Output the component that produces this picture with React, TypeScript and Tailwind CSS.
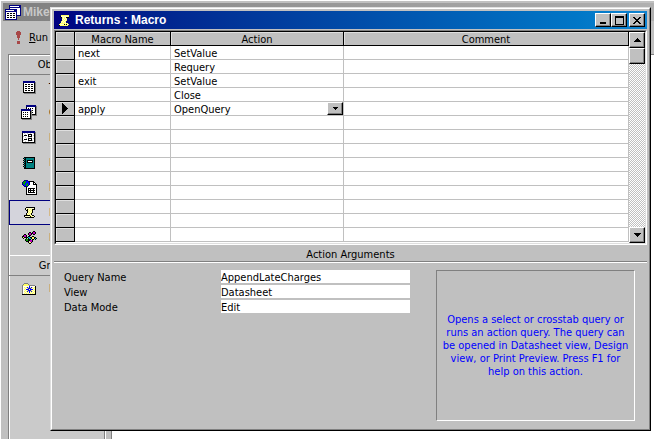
import React from "react";

const palette: Record<string, string> = {
  K: "#000000",
  W: "#ffffff",
  N: "#000080",
  G: "#808080",
  Y: "#ffff66",
  C: "#ffffcc",
  T: "#008080",
  B: "#0000ff",
  E: "#00a000",
  M: "#c000c0",
  A: "#00c0c0",
  R: "#a84848",
  L: "#c0c0c0",
};

function Pixels({ rows }: { rows: string[] }) {
  const width = Math.max(...rows.map((r) => r.length));
  return (
    <svg
      width={width}
      height={rows.length}
      viewBox={`0 0 ${width} ${rows.length}`}
      shapeRendering="crispEdges"
      className="block shrink-0"
      aria-hidden="true"
    >
      {rows.flatMap((row, y) =>
        [...row].map((c, x) =>
          palette[c] ? <rect key={`${x}-${y}`} x={x} y={y} width={1} height={1} fill={palette[c]} /> : null,
        ),
      )}
    </svg>
  );
}

const tableIcon = [
  "NNNNNNNNNNNN.",
  "NNNNNNNNNNNNG",
  "KWWWWWWWWWWKG",
  "KWKKWKKWKKWKG",
  "KWWWWWWWWWWKG",
  "KWKKWKKWKKWKG",
  "KWWWWWWWWWWKG",
  "KWKKWKKWKKWKG",
  "KWWWWWWWWWWKG",
  "KWKKWKKWKKWKG",
  "KWWWWWWWWWWKG",
  "KKKKKKKKKKKKG",
  ".GGGGGGGGGGGG",
];

const queryIcon = [
  ".....NNNNNNNNNN.",
  ".....NNNNNNNNNNG",
  ".....KWWWWWWWWKG",
  ".....KWKWKWKWWKG",
  "NNNNNNNNNNWWWWKG",
  "NNNNNNNNNNGKWWKG",
  "KWWWWWWWWKGWWWKG",
  "KWKWKWKWWKGKWWKG",
  "KWWWWWWWWKGWWWKG",
  "KWKWKWKWWKGKKKKG",
  "KWWWWWWWWKGGGGGG",
  "KWKWKWKWWKG.....",
  "KWWWWWWWWKG.....",
  "KKKKKKKKKKG.....",
  ".GGGGGGGGGG.....",
];

const formIcon = [
  "NNNNNNNNNNNNN.",
  "NNNNNNNNNNNNNG",
  "KWLWWLWWLWWLKG",
  "KWWLWWKKKKWWKG",
  "KWKKKWKWWKWLKG",
  "KLWWWWKKKKWWKG",
  "KWWLWWLWWLWWKG",
  "KWWWLWKKKKWLKG",
  "KWKKKWKWWKWWKG",
  "KLWWWWKKKKLWKG",
  "KWWLWWLWWWWWKG",
  "KKKKKKKKKKKKKG",
  ".GGGGGGGGGGGGG",
];

const reportIcon = [
  ".KKKKKKKKKKK",
  "KTKTTTTTTTTK",
  ".KKTTTTTTTTK",
  "KTKTKKKKKKTK",
  ".KKTKWWWWKTK",
  "KTKTKKKKKKTK",
  ".KKTTTTTTTTK",
  "KTKTTTTTTTTK",
  ".KKTTTTTTTTK",
  "KTKTTTTTTTTK",
  ".KKTTTTTTTTK",
  ".KKKKKKKKKKK",
];

const pageIcon = [
  "..NNNN.........",
  ".NEEBBNKKKKK...",
  "NEEEBBBNWWWKK..",
  "NEEBBEBNWWWKWK.",
  "NBEBEEBNWWWKKKK",
  ".NBBEENWWWWWWWK",
  "..NNNNWWWWWWWWK",
  "....KWWWWWWWWWK",
  "....KWKKKKKKKWK",
  "....KWKWKWWKWWK",
  "....KWKKKKKKKWK",
  "....KWKWKWWKWWK",
  "....KWKKKKKKKWK",
  "....KWWWWWWWWWK",
  "....KKKKKKKKKKK",
];

const macroIcon = [
  "..KKKKKKKKK",
  ".KCCCCCCCCK",
  ".KCKYCYCKKK",
  "..KKCYCYK..",
  "...KYCYCK..",
  "...KCYCYK..",
  "..KCYCYK...",
  "..KYCYCK...",
  "KKKKKKYCKK.",
  "KCCCCCKYCCK",
  ".KKKKKKKKK.",
];

const moduleIcon = [
  "...........KK..",
  ".......KK.KMMK.",
  "......KMMKKMMK.",
  "..KK..KMMK.KK..",
  ".KMMK..KK......",
  "KKMMK.KK..KK...",
  "KYKKKKAAKKYYKK.",
  ".K..K.KAAKYYKAK",
  "...KEEKKK.KK.K.",
  "...KEEKKMMK....",
  "....KKK.MMK....",
  "......KYYK.....",
  ".......KK......",
];

const favoriteIcon = [
  "..GGGG........",
  ".GYYYYG.......",
  "GYYYYYYGGGGGG.",
  "GWWWWWWBWWWWWK",
  "GWYCYBYBYBYCYK",
  "GWCYCYBBBYCYCK",
  "GWYCBBBYBBBCYK",
  "GWCYCYBBBYCYCK",
  "GWYCYBYBYBYCYK",
  "GWCYCYCBCYCYCK",
  "GWYCYCYCYCYCYK",
  "KKKKKKKKKKKKKK",
];

const databaseIcon = [
  "....NNNNNNNNNNNN",
  "....NWWWWWWWWWNN",
  "....NNNNNNNNNNNN",
  "....NWWWWWWWWWWN",
  "NNNNNNNNNNNNWWWN",
  "NWWWWWWWWNNNWWWN",
  "NNNNNNNNNNNNWWWN",
  "NWWWWWWWWWWNWWWN",
  "NWKKWKKWKKWNWWWN",
  "NWWWWWWWWWWNWWWN",
  "NWKKWKKWKKWNNNNN",
  "NWWWWWWWWWWN....",
  "NWKKWKKWKKWN....",
  "NWWWWWWWWWWN....",
  "NNNNNNNNNNNN....",
];

const runIcon = [
  ".RRR.",
  "RRRRR",
  "RRRRR",
  "RRRRR",
  ".RRR.",
  ".RRR.",
  ".RRR.",
  "..R..",
  "..R..",
  ".....",
  ".RRR.",
  ".RRR.",
  ".RRR.",
];

const titleIcon = [
  "..YYYYYYYY",
  ".KCCCCCCCY",
  "..KYCYCKKK",
  "...YCYCY..",
  "...CYCYC..",
  "...YCYCY..",
  "..YCYCY...",
  "..CYCYC...",
  ".YYYYYCYY.",
  "YCCCCKYKCY",
  "KYYYYYYYY.",
];

const upArrow = ["...K...", "..KKK..", ".KKKKK.", "KKKKKKK"];
const downArrow = ["KKKKKKK", ".KKKKK.", "..KKK..", "...K..."];
const smallDown = ["KKKKK", ".KKK.", "..K.."];
const rowPointer = [
  "K.....", "KK....", "KKK...", "KKKK..", "KKKKK.", "KKKKKK", "KKKKK.", "KKKK..", "KKK...", "KK....", "K.....",
];
const minimizeGlyph = [".......", ".......", ".......", ".......", ".......", ".......", "KKKKKK.", "KKKKKK."];
const maximizeGlyph = [
  "KKKKKKKKK", "KKKKKKKKK", "K.......K", "K.......K", "K.......K", "K.......K", "K.......K", "K.......K", "KKKKKKKKK",
];
const closeGlyph = ["KK....KK", ".KK..KK.", "..KKKK..", "...KK...", "..KKKK..", ".KK..KK.", "KK....KK"];

const raised =
  "flex items-center justify-center bg-[#c0c0c0] border border-t-white border-l-white border-r-black border-b-black shadow-[inset_-1px_-1px_0_#808080]";

function CaptionButton({ label, glyph }: { label: string; glyph: string[] }) {
  return (
    <button type="button" aria-label={label} className={`${raised} h-3.5 w-4`}>
      <Pixels rows={glyph} />
    </button>
  );
}

const objects = [
  { name: "Tables", icon: tableIcon },
  { name: "Queries", icon: queryIcon },
  { name: "Forms", icon: formIcon },
  { name: "Reports", icon: reportIcon },
  { name: "Pages", icon: pageIcon },
  { name: "Macros", icon: macroIcon, selected: true },
  { name: "Modules", icon: moduleIcon },
];

function SidebarItem({ name, icon, selected }: { name: string; icon: string[]; selected?: boolean }) {
  return (
    <button
      type="button"
      className={`flex h-[25px] w-full items-center border text-left ${
        selected ? "border-[#000080] bg-[#d4d4dc]" : "border-transparent"
      }`}
    >
      <span className="mr-px flex w-[38px] shrink-0 justify-center">
        <Pixels rows={icon} />
      </span>
      {name}
    </button>
  );
}

function DatabaseWindow() {
  return (
    <div className="flex min-h-screen flex-col bg-[#c0c0c0] pt-0.5">
      <div className="ml-0.5 flex h-[18px] items-center gap-0.5 bg-linear-to-r from-[#808080] to-[#b0b0b0] pl-0.5 font-[Liberation_Sans,sans-serif] text-[12px] font-bold text-[#c8c8c8]">
        <Pixels rows={databaseIcon} />
        Mike
      </div>
      <div className="flex h-[33px] items-center pl-[15px]">
        <button type="button" className="flex items-center gap-2">
          <Pixels rows={runIcon} />
          <span>
            <span className="underline">R</span>un
          </span>
        </button>
      </div>
      <div className="flex grow pl-[7px]">
        <nav className="w-[97px] border-t border-r border-l border-[#808080] bg-[#cacaca] shadow-[inset_1px_1px_0_#fff]">
          <div className="flex h-[19px] items-center justify-center">Objects</div>
          <div className="border-t border-[#808080]">
            {objects.map((o) => (
              <SidebarItem key={o.name} {...o} />
            ))}
          </div>
          <div className="mt-[5px] flex h-5 items-center justify-center border-t border-white">Groups</div>
          <div className="border-t border-[#808080]">
            <SidebarItem name="Favorites" icon={favoriteIcon} />
          </div>
        </nav>
        <div className="w-1.5 border-l border-white" />
        <div className="grow border-t border-l border-[#808080] bg-white" />
      </div>
    </div>
  );
}

const macroRows = [
  { name: "next", action: "SetValue" },
  { name: "", action: "Requery" },
  { name: "exit", action: "SetValue" },
  { name: "", action: "Close" },
  { name: "apply", action: "OpenQuery", current: true },
  ...Array.from({ length: 9 }, () => ({ name: "", action: "" })),
] as { name: string; action: string; current?: boolean }[];

function ActionSelect() {
  return (
    <div className="relative flex h-[13px]">
      <select
        aria-label="Action"
        defaultValue="OpenQuery"
        className="h-[13px] w-full appearance-none bg-transparent pt-0.5 pl-[3px] leading-[11px] outline-none"
      >
        <option>OpenQuery</option>
        <option>SetValue</option>
        <option>Requery</option>
        <option>Close</option>
      </select>
      <span className={`${raised} pointer-events-none absolute top-0 right-0 h-[13px] w-4`}>
        <Pixels rows={smallDown} />
      </span>
    </div>
  );
}

function MacroGrid() {
  const head =
    "h-3.5 border-r border-b border-black bg-[#c0c0c0] px-0 pt-0.5 pb-0 text-center font-normal leading-[11px] shadow-[inset_1px_1px_0_#dfdfdf]";
  const cell = "h-3.5 border-r border-b border-[#c0c0c0] p-0 leading-[11px]";
  return (
    <div className="flex border border-t-[#808080] border-r-white border-b-white border-l-[#808080]">
      <div className="flex min-w-0 grow border border-t-black border-r-[#dfdfdf] border-b-[#dfdfdf] border-l-black bg-white pb-px">
        <table className="w-full table-fixed border-separate border-spacing-0">
          <colgroup>
            <col className="w-[19px]" />
            <col className="w-24" />
            <col className="w-[173px]" />
            <col />
          </colgroup>
          <thead>
            <tr>
              <th className={head} aria-label="Row selector" />
              <th className={head}>Macro Name</th>
              <th className={head}>Action</th>
              <th className={head}>Comment</th>
            </tr>
          </thead>
          <tbody>
            {macroRows.map((r, i) => (
              <tr key={i}>
                <td className="h-3.5 border-r border-b border-black bg-[#c0c0c0] p-0 shadow-[inset_1px_1px_0_#dfdfdf]">
                  {r.current && (
                    <span className="flex justify-center">
                      <Pixels rows={rowPointer} />
                    </span>
                  )}
                </td>
                <td className={cell}>
                  <div className="pt-0.5 pl-[3px]">{r.name}</div>
                </td>
                <td className={cell}>
                  {r.current ? <ActionSelect /> : <div className="pt-0.5 pl-[3px]">{r.action}</div>}
                </td>
                <td className={cell} />
              </tr>
            ))}
          </tbody>
        </table>
        <div className="-mb-px flex w-4 shrink-0 flex-col bg-[repeating-conic-gradient(#fff_0_25%,#c0c0c0_0_50%)] bg-[length:2px_2px]">
          <button type="button" aria-label="Scroll up" className={`${raised} h-4 w-4`}>
            <Pixels rows={upArrow} />
          </button>
          <div className={`${raised} h-4 w-4`} />
          <div className="grow" />
          <button type="button" aria-label="Scroll down" className={`${raised} h-4 w-4`}>
            <Pixels rows={downArrow} />
          </button>
        </div>
      </div>
    </div>
  );
}

const macroArguments = [
  { id: "query-name", label: "Query Name", value: "AppendLateCharges" },
  { id: "view", label: "View", value: "Datasheet" },
  { id: "data-mode", label: "Data Mode", value: "Edit" },
];

function MacroWindow() {
  return (
    <section className="absolute top-[7px] right-[3px] left-[50px] border border-t-[#dfdfdf] border-r-black border-b-black border-l-[#dfdfdf] bg-[#c0c0c0]">
      <div className="border border-t-white border-r-[#808080] border-b-[#808080] border-l-white p-0.5">
        <header className="flex h-[18px] items-center bg-linear-to-r from-[#000080] to-[#1084d0] pr-0.5 pl-[5px]">
          <Pixels rows={titleIcon} />
          <h1 className="grow pl-1.5 font-[Liberation_Sans,sans-serif] text-[12px] font-bold text-white">
            Returns : Macro
          </h1>
          <CaptionButton label="Minimize" glyph={minimizeGlyph} />
          <CaptionButton label="Maximize" glyph={maximizeGlyph} />
          <span className="w-0.5" />
          <CaptionButton label="Close" glyph={closeGlyph} />
        </header>
        <div className="h-px" />
        <MacroGrid />
        <h2 className="flex h-[17px] items-center justify-center border-b border-[#808080] pt-0.5">
          Action Arguments
        </h2>
        <div className="flex items-start border-t border-white pt-[7px] pr-3 pb-1.5 pl-2.5">
          <div className="flex flex-col gap-0.5 leading-[11px]">
            {macroArguments.map((a) => (
              <div key={a.id} className="flex h-[13px] items-center">
                <label htmlFor={a.id} className="w-[157px] pt-0.5">
                  {a.label}
                </label>
                <input
                  id={a.id}
                  defaultValue={a.value}
                  className="h-[13px] w-[189px] bg-white pt-0.5 leading-[11px] outline-none"
                />
              </div>
            ))}
          </div>
          <p className="ml-[26px] flex h-[151px] grow items-center justify-center border border-t-[#808080] border-r-white border-b-white border-l-[#808080] px-1 text-center text-[#0000ff]">
            Opens a select or crosstab query or runs an action query. The query can be opened in Datasheet view, Design
            view, or Print Preview. Press F1 for help on this action.
          </p>
        </div>
      </div>
    </section>
  );
}

export default function App() {
  return (
    <main className="relative min-h-screen overflow-hidden bg-white pt-px pl-px font-[DejaVu_Sans_Condensed,sans-serif] text-[11px] leading-[13px] text-black">
      <DatabaseWindow />
      <MacroWindow />
    </main>
  );
}
